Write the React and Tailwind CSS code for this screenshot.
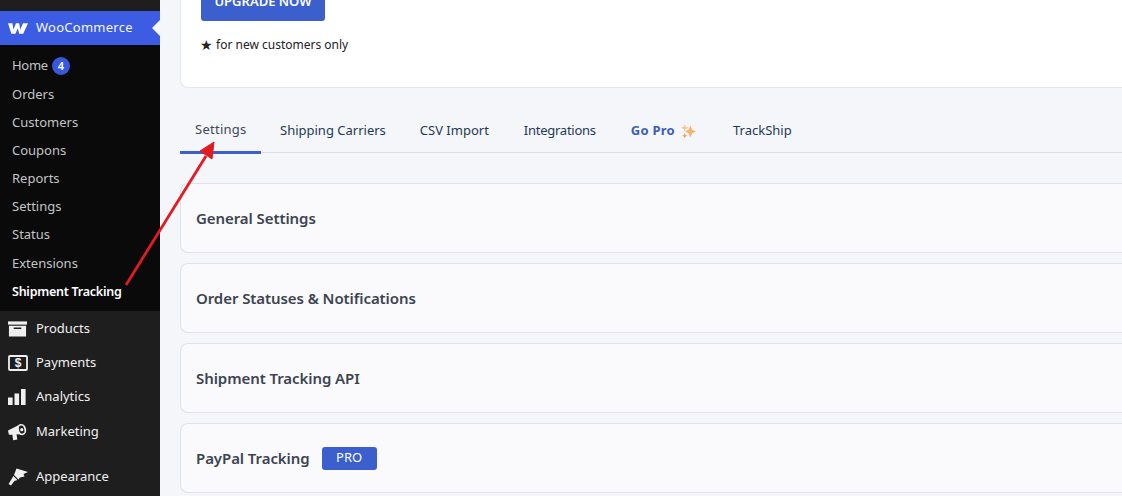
const font = { fontFamily: '"Noto Sans", sans-serif' };

const subItems = ['Orders', 'Customers', 'Coupons', 'Reports', 'Settings', 'Status'];

const tabs = [
  { label: 'Settings', className: 'w-[81px] text-[#3c4758] border-b-[3px] border-[#3b5fcc] pl-[15px] tracking-[0.02em]' },
  { label: 'Shipping Carriers', className: 'ml-[19px] text-[#1f3a52]' },
  { label: 'CSV Import', className: 'ml-[34px] text-[#1f3a52]' },
  { label: 'Integrations', className: 'ml-[35px] tracking-[-0.02em] text-[#1f3a52]' },
];

const ProductsIcon = () => (
  <svg viewBox="0 0 20 16" className="h-[16px] w-[19px]" fill="#f0f0f1">
    <path d="M0 0h20v3.4H0z" />
    <path fillRule="evenodd" d="M1 4.6h18V16H1zM6 6.5V8h8V6.5z" />
  </svg>
);

const PaymentsIcon = () => (
  <svg viewBox="0 0 20 16" className="h-[16px] w-[20px]">
    <rect x="1" y="1" width="18" height="14" rx="1" fill="none" stroke="#f0f0f1" strokeWidth="1.8" />
    <text x="10" y="12.4" textAnchor="middle" fontSize="12" fontWeight="700" fill="#f0f0f1" fontFamily="Liberation Sans, sans-serif">$</text>
  </svg>
);

const AnalyticsIcon = () => (
  <svg viewBox="0 0 18 16" className="h-[16px] w-[18px]" fill="#f0f0f1">
    <path d="M0 8.5h4.6V16H0zM6.5 4.5h4.6V16H6.5zM13 0h4.6v16H13z" />
  </svg>
);

const MarketingIcon = () => (
  <svg viewBox="0 0 20 20" className="h-[20px] w-[19px]" fill="#f0f0f1">
    <path d="M0 8.5 11 3 14 12.5 9 12.4 9.8 18 5.4 18.6 4.6 13 1 13z" />
    <ellipse cx="14.4" cy="7.4" rx="4.6" ry="6" transform="rotate(-14 14.4 7.4)" />
    <ellipse cx="14.4" cy="7.4" rx="2.8" ry="4.3" transform="rotate(-14 14.4 7.4)" fill="#1e1e1e" />
    <circle cx="14.5" cy="7.6" r="1.7" />
  </svg>
);

const AppearanceIcon = () => (
  <svg viewBox="0 0 20 18" className="h-[18px] w-[20px]" fill="#f0f0f1">
    <path d="M8.5 0.5 20 4 15.5 6 16.5 8.5 12 9.5 10.5 11.5 6 7z" />
    <path d="M5.4 8 9.4 12 6.4 13 3 17.6 0.6 16 3.6 11z" />
  </svg>
);

const WooLogo = () => (
  <svg viewBox="0 0 20 11" className="h-[11px] w-[20px]" fill="#fff">
    <path d="M0 .2h4.4l1 6.4L8 .2h3.2l1 6.4L15 .2h5l-4.8 10.6h-4L9.8 5.2 7.4 10.8h-4z" />
  </svg>
);

const MenuRow = ({ icon, label, className = '' }) => (
  <div className={`flex h-[34px] items-center text-[13px] text-[#f0f0f1] ${className}`}>
    <span className="flex w-[36px] pl-[8px]">{icon}</span>
    <span>{label}</span>
  </div>
);

const Sidebar = () => (
  <aside className="flex h-full w-[160px] shrink-0 flex-col bg-[#1e1e1e]">
    <div className="h-[11px]" />
    <div className="relative flex h-[34px] items-center bg-[#3c5ce4] text-[13px] tracking-[0.02em] text-[#f5f7ff]">
      <span className="flex w-[36px] pl-[8px]">
        <WooLogo />
      </span>
      <span>WooCommerce</span>
      <span className="absolute right-0 top-[9px] h-0 w-0 border-y-[8px] border-r-[8px] border-y-transparent border-r-[#f5f6fa]" />
    </div>
    <div className="flex h-[266px] flex-col bg-[#0a0a0a] pl-[12px] pt-[7px] text-[13px] text-[#c3c4c7]">
      <div className="flex h-[28px] items-center gap-[4px]">
        <span className="tracking-[-0.02em]">Home</span>
        <span className="flex h-[18px] w-[18px] items-center justify-center rounded-full bg-[#3858e0] text-[11px] font-semibold text-white">4</span>
      </div>
      <div className="flex flex-col pt-px">
        {subItems.map((item) => (
          <div key={item} className="flex h-[28px] items-center">{item}</div>
        ))}
        <div className="mt-px flex h-[28px] items-center">Extensions</div>
      </div>
      <div className="flex h-[28px] items-center text-[12.5px] font-semibold tracking-[-0.02em] text-white">Shipment Tracking</div>
    </div>
    <div className="h-px" />
    <MenuRow icon={<ProductsIcon />} label="Products" />
    <MenuRow icon={<PaymentsIcon />} label="Payments" />
    <MenuRow icon={<AnalyticsIcon />} label="Analytics" />
    <MenuRow icon={<MarketingIcon />} label="Marketing" className="mt-px" />
    <MenuRow icon={<AppearanceIcon />} label="Appearance" className="mt-[11px]" />
  </aside>
);

const Panel = ({ title, children }) => (
  <div className="flex h-[70px] items-center gap-[12px] rounded-l-[8px] border border-r-0 border-[#e0e2e7] bg-[#fafafc] pl-[15px]">
    <h3 className="text-[15px] font-semibold tracking-[-0.005em] text-[#3c4450]">{title}</h3>
    {children}
  </div>
);

export default function App() {
  return (
    <div className="relative flex h-[496px] w-[1122px] overflow-hidden bg-[#f5f6fa]" style={font}>
      <Sidebar />
      <main className="min-w-0 flex-1 pl-[20px]">
        <div className="-mt-[18px] flex h-[106px] flex-col rounded-bl-[8px] border-b border-l border-[#e6e7eb] bg-white pl-[20px]">
          <button className="h-[39px] w-[124px] rounded-[3px] bg-[#3b5fcc] text-[13px] font-semibold text-white">UPGRADE NOW</button>
          <p className="mt-[15px] flex items-center gap-[3px] text-[12px] text-[#222]">
            <span className="-ml-px text-[14px] leading-none">★</span>
            <span>for new customers only</span>
          </p>
        </div>
        <nav className="mt-[22px] flex h-[43px] items-stretch border-b border-[#dcdee3] text-[13px]">
          {tabs.map((tab) => (
            <span key={tab.label} className={`flex h-[44px] items-center pb-[2px] ${tab.className}`}>{tab.label}</span>
          ))}
          <span className="ml-[35px] flex h-[44px] items-center gap-[6px] pb-[2px] font-bold tracking-[0.02em] text-[#3b5fb8]">
            Go Pro
            <svg viewBox="0 0 16 16" className="h-[15px] w-[15px]" fill="#f7b267">
              <path d="M10 1.5 11.8 6.2 16 8 11.8 9.8 10 14.5 8.2 9.8 4 8 8.2 6.2z" />
              <path d="M4 0 5 2.8 8 4 5 5.2 4 8 3 5.2 0 4 3 2.8z" fill="#f9c58d" />
              <path d="M4 9.5 4.9 11.6 7 12.5 4.9 13.4 4 15.5 3.1 13.4 1 12.5 3.1 11.6z" fill="#f4a35c" />
            </svg>
          </span>
          <span className="ml-[37px] flex h-[44px] items-center pb-[2px] text-[#1f3a52]">TrackShip</span>
        </nav>
        <div className="mt-[30px] flex flex-col gap-[10px]">
          <Panel title="General Settings" />
          <Panel title="Order Statuses & Notifications" />
          <Panel title="Shipment Tracking API" />
          <Panel title="PayPal Tracking">
            <span className="flex h-[23px] w-[55px] items-center justify-center rounded-[3px] bg-[#3b5fcc] text-[13px] text-white">PRO</span>
          </Panel>
        </div>
      </main>
      <svg className="absolute left-0 top-0 h-[496px] w-[1122px]" viewBox="0 0 1122 496" fill="none">
        <path d="M126 285 206 156" stroke="#e01b24" strokeWidth="2.8" />
        <path d="M214 142 200 151 212 159z" fill="#e01b24" stroke="#e01b24" strokeWidth="1" />
      </svg>
    </div>
  );
}
